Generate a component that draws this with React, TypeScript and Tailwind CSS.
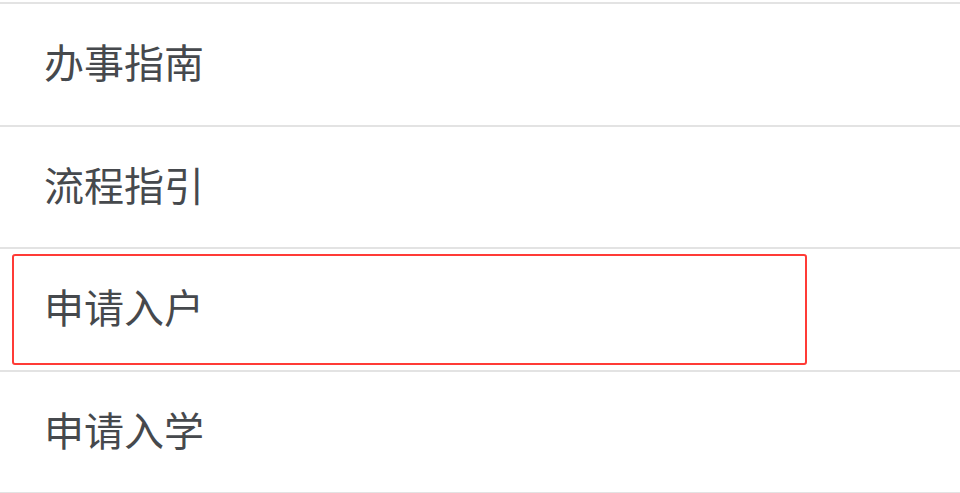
const items = ["办事指南", "流程指引", "申请入户", "申请入学"];

export default function App() {
  return (
    <div className="w-[960px] h-[493px] overflow-hidden bg-white">
      <div className="mt-[2px] border-t-2 border-[#e3e3e3]">
        {items.map((label, i) => (
          <div
            key={label}
            className="relative h-[122.5px] border-b-2 border-[#e3e3e3] flex items-center pl-[44px] pb-[6px]"
          >
            {i === 2 && (
              <div className="absolute left-[12px] top-[5px] w-[795px] h-[111px] border-2 border-[#ff3b36] rounded-[3px]" />
            )}
            <span
              className="text-[40px] leading-none text-[#46494d]"
              style={{ fontFamily: '"Noto Sans CJK SC", sans-serif' }}
            >
              {label}
            </span>
          </div>
        ))}
      </div>
    </div>
  );
}
